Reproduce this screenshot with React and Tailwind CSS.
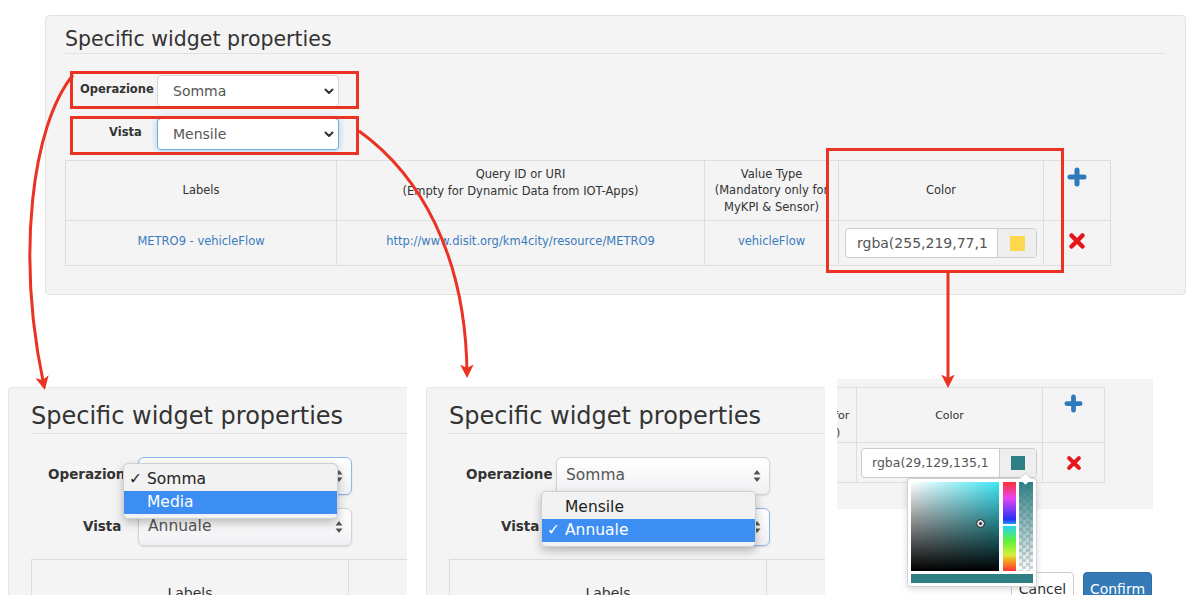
import React from 'react';

const FONT = "font-['DejaVu_Sans',sans-serif]";
const RED = '#ea3323';

// small glyph drawings
function Chevron() {
  return (
    <svg width="10" height="7" viewBox="0 0 10 7" className="shrink-0">
      <path d="M1.5 1.5 L5 5 L8.5 1.5" fill="none" stroke="#333" strokeWidth="2" strokeLinecap="round" strokeLinejoin="round" />
    </svg>
  );
}

function UpDown() {
  return (
    <svg width="8" height="14" viewBox="0 0 8 14" className="shrink-0">
      <path d="M4 1 L7.5 5.5 H0.5 Z" fill="#555" />
      <path d="M4 13 L7.5 8.5 H0.5 Z" fill="#555" />
    </svg>
  );
}

function PlusIcon({ size = 20 }) {
  return (
    <svg width={size} height={size} viewBox="0 0 20 20">
      <path d="M10 3 V17 M3 10 H17" stroke="#2f79bd" strokeWidth="5" strokeLinecap="round" />
    </svg>
  );
}

function RemoveIcon({ size = 18 }) {
  return (
    <svg width={size} height={size} viewBox="0 0 18 18">
      <path d="M3.5 3.5 L14.5 14.5 M14.5 3.5 L3.5 14.5" stroke="#e8141b" strokeWidth="4.5" strokeLinecap="round" />
    </svg>
  );
}

function TopSelect({ value, focused }) {
  return (
    <div className={`flex h-[32px] w-[182px] items-center justify-between rounded-[4px] border bg-white pl-[15px] pr-[4px] text-[14px] text-[#555] ${focused ? 'border-[#66afe9] shadow-[0_0_6px_rgba(102,175,233,0.6)]' : 'border-[#d6d6d6]'}`}>
      <span>{value}</span>
      <Chevron />
    </div>
  );
}

function MacSelect({ value, focused }) {
  return (
    <div className={`flex h-[38px] w-[214px] items-center justify-between rounded-[6px] border bg-[linear-gradient(to_bottom,#ffffff,#f1f1f4)] pl-[9px] pr-[8px] text-[15.5px] text-[#555] shadow-[0_1px_2px_rgba(0,0,0,0.12)] ${focused ? 'border-[#8db7ee]' : 'border-[#d4d4d8]'}`}>
      <span>{value}</span>
      <UpDown />
    </div>
  );
}

function MacMenu({ items, selected, highlight, className }) {
  return (
    <div className={`absolute w-[215px] rounded-[5px] border border-[#d0d0d0] bg-[#f2f2f2] py-[4px] shadow-[0_4px_10px_rgba(0,0,0,0.25)] ${className}`}>
      {items.map((it) => (
        <div key={it} className={`flex h-[23px] items-center text-[15.5px] ${it === highlight ? 'bg-[#3d8ef2] text-white' : 'text-[#222]'}`}>
          <span className="w-[23px] pl-[5px]">{it === selected ? '✓' : ''}</span>
          <span>{it}</span>
        </div>
      ))}
    </div>
  );
}

function MiniPanel({ opValue, vistaValue, opFocused, vistaFocused, menu, className }) {
  return (
    <div className={`relative h-[208px] w-[399px] shrink-0 overflow-hidden ${className}`}>
      <div className="h-full w-[430px] rounded-tl-[4px] border-l border-t border-[#e6e6e6] bg-[#f4f4f4] pl-[22px] pt-[13px]">
        <h2 className="border-b border-[#e0e0e0] pb-[2px] text-[24px] leading-[30px] text-[#333]">Specific widget properties</h2>
        <div className="mt-[23px] flex">
          <div className="w-[107px] pl-[17px] pt-[9px] text-[13.5px] font-bold leading-[17px] text-[#333]">Operazione</div>
          <MacSelect value={opValue} focused={opFocused} />
        </div>
        <div className="mt-[13px] flex">
          <div className="w-[107px] pl-[52px] pt-[10px] text-[13.5px] font-bold leading-[17px] text-[#333]">Vista</div>
          <MacSelect value={vistaValue} focused={vistaFocused} />
        </div>
        <div className="mt-[13px] flex h-[80px] border-l border-t border-[#dcdcdc]">
          <div className="w-[317px] shrink-0 border-r border-[#dcdcdc] pt-[24px] text-center text-[14px] leading-[18px] text-[#333]">Labels</div>
        </div>
      </div>
      {menu}
    </div>
  );
}

function Picker() {
  return (
    <div className="absolute left-[70px] top-[99px] h-[109px] w-[130px] rounded-[3px] border border-[#cfd3dc] bg-white p-[3px] shadow-[0_2px_6px_rgba(0,0,0,0.15)]">
      <div className="absolute right-[6px] top-[-5px] h-[9px] w-[9px] rotate-45 border-l border-t border-[#cfd3dc] bg-white" />
      <div className="flex">
        <div className="relative h-[89px] w-[88px] bg-[linear-gradient(to_top,#000,transparent),linear-gradient(to_right,#fff,#3fe6f5)]">
          <div className="absolute left-[66px] top-[38px] h-[7px] w-[7px] rounded-full border-2 border-[#ddd] bg-[#333] outline outline-1 outline-[#333]" />
        </div>
        <div className="relative ml-[4px] h-[89px] w-[13px] bg-[linear-gradient(to_bottom,#f33,#e845f0_18%,#2232f5_42%,#27d7f0_50%,#5ef03a_66%,#d7f03a_82%,#f5a623_88%,#f33)]">
          <div className="absolute left-0 top-[42px] h-[2px] w-full bg-white" />
        </div>
        <div className="ml-[3px] h-[89px] w-[14px] bg-[linear-gradient(to_bottom,#2e7f84,rgba(46,127,132,0)),repeating-conic-gradient(#d4d4d4_0_25%,#ffffff_0_50%)] bg-[length:100%_100%,7px_7px]" />
      </div>
      <div className="mt-[3px] h-[9px] w-[122px] bg-[#2e7f84]" />
    </div>
  );
}

export default function App() {
  const td = 'border border-[#dedede]';
  return (
    <div className={`relative h-[595px] w-[1200px] overflow-hidden bg-white ${FONT}`}>
      {/* main screenshot */}
      <div className="pl-[45px] pt-[15px]">
        <div className="h-[280px] w-[1141px] rounded-[4px] border border-[#e3e3e3] bg-[#f4f4f4] px-[19px] pt-[9px]">
          <h2 className="border-b border-[#e2e2e2] text-[20.5px] leading-[28px] text-[#333]">Specific widget properties</h2>
          <div className="mt-[21px] flex">
            <div className="w-[92px] pl-[15px] pt-[7px] text-[11.5px] font-bold leading-[14px] text-[#333]">Operazione</div>
            <TopSelect value="Somma" />
          </div>
          <div className="mt-[11px] flex">
            <div className="w-[92px] pl-[44px] pt-[7px] text-[11.5px] font-bold leading-[14px] text-[#333]">Vista</div>
            <TopSelect value="Mensile" focused />
          </div>
          <table className="mt-[10px] w-[1045px] table-fixed border-collapse text-center text-[11.5px] leading-[16.5px] text-[#333]">
            <colgroup>
              <col className="w-[271px]" />
              <col className="w-[368px]" />
              <col className="w-[134px]" />
              <col className="w-[205px]" />
              <col className="w-[67px]" />
            </colgroup>
            <tbody>
              <tr className="h-[60px]">
                <td className={td}>Labels</td>
                <td className={`${td} pt-[5px] align-top`}>Query ID or URI<br />(Empty for Dynamic Data from IOT-Apps)</td>
                <td className={td}>Value Type<br />(Mandatory only for<br />MyKPI &amp; Sensor)</td>
                <td className={td}>Color</td>
                <td className={`${td} pt-[6px] align-top`}>
                  <div className="flex justify-center"><PlusIcon size={20} /></div>
                </td>
              </tr>
              <tr className="h-[45px] text-[#3a7bbd]">
                <td className={`${td} pb-[4px]`}>METRO9 - vehicleFlow</td>
                <td className={`${td} pb-[4px]`}>http://www.disit.org/km4city/resource/METRO9</td>
                <td className={`${td} pb-[4px]`}>vehicleFlow</td>
                <td className={`${td} pl-[6px]`}>
                  <div className="flex h-[30px] w-[192px] overflow-hidden rounded-[4px] border border-[#ccc] bg-white">
                    <div className="flex flex-1 items-center pl-[11px] text-left text-[14px] text-[#555]">rgba(255,219,77,1</div>
                    <div className="flex w-[39px] items-center justify-center border-l border-[#ccc] bg-[#eee]">
                      <div className="h-[15px] w-[15px] bg-[#ffd94d]" />
                    </div>
                  </div>
                </td>
                <td className={`${td} pb-[4px]`}>
                  <div className="flex justify-center"><RemoveIcon size={18} /></div>
                </td>
              </tr>
            </tbody>
          </table>
        </div>
      </div>

      {/* zoomed details */}
      <div className="mt-[84px] flex items-start pl-[8px]">
        <MiniPanel
          className="mt-[8px]"
          opValue="Somma"
          vistaValue="Annuale"
          opFocused
          menu={<MacMenu items={['Somma', 'Media']} selected="Somma" highlight="Media" className="left-[115px] top-[76px]" />}
        />
        <MiniPanel
          className="ml-[19px] mt-[8px]"
          opValue="Somma"
          vistaValue="Annuale"
          vistaFocused
          menu={<MacMenu items={['Mensile', 'Annuale']} selected="Annuale" highlight="Annuale" className="left-[115px] top-[104px]" />}
        />
        <div className="relative ml-[12px] h-[216px] w-[316px] shrink-0 overflow-hidden bg-white">
          <div className="h-[130px] bg-[#f4f4f4] pt-[8px]">
            <table className="ml-[-104px] table-fixed border-collapse text-center text-[11px] leading-[17px] text-[#333]">
              <colgroup>
                <col className="w-[123px]" />
                <col className="w-[186px]" />
                <col className="w-[62px]" />
              </colgroup>
              <tbody>
                <tr className="h-[55px]">
                  <td className={td}>Value Type<br />(Mandatory only for<br />MyKPI &amp; Sensor)</td>
                  <td className={td}>Color</td>
                  <td className={`${td} pt-[6px] align-top`}>
                    <div className="flex justify-center"><PlusIcon size={19} /></div>
                  </td>
                </tr>
                <tr className="h-[40px]">
                  <td className={td} />
                  <td className={`${td} pl-[4px]`}>
                    <div className="flex h-[30px] w-[176px] overflow-hidden rounded-[4px] border border-[#ccc] bg-white">
                      <div className="flex flex-1 items-center pl-[10px] text-left text-[12.5px] text-[#555]">rgba(29,129,135,1</div>
                      <div className="flex w-[37px] items-center justify-center border-l border-[#ccc] bg-[#eee]">
                        <div className="h-[14px] w-[14px] bg-[#2e7f84]" />
                      </div>
                    </div>
                  </td>
                  <td className={td}>
                    <div className="flex justify-center"><RemoveIcon size={16} /></div>
                  </td>
                </tr>
              </tbody>
            </table>
          </div>
          <div className="mt-[63px] flex justify-end gap-[9px] pr-[1px]">
            <div className="flex h-[34px] w-[63px] items-center justify-center rounded-[4px] border border-[#ccc] bg-white text-[14px] text-[#333]">Cancel</div>
            <div className="flex h-[34px] w-[69px] items-center justify-center rounded-[4px] border border-[#2e6da4] bg-[#337ab7] text-[14px] text-white">Confirm</div>
          </div>
          <Picker />
        </div>
      </div>

      {/* red annotations */}
      <svg className="pointer-events-none absolute left-0 top-0" width="1200" height="595" viewBox="0 0 1200 595">
        <defs>
          <marker id="ah" viewBox="0 0 10 10" refX="7" refY="5" markerWidth="4.5" markerHeight="4.5" orient="auto" markerUnits="strokeWidth">
            <path d="M0 0 L10 5 L0 10 L2.5 5 Z" fill={RED} />
          </marker>
        </defs>
        <rect x="71.5" y="72.5" width="286" height="35" fill="none" stroke={RED} strokeWidth="3" />
        <rect x="71.5" y="117.5" width="286" height="36" fill="none" stroke={RED} strokeWidth="3" />
        <rect x="827.5" y="149.5" width="235" height="122" fill="none" stroke={RED} strokeWidth="3" />
        <path d="M948 273 L948 384" fill="none" stroke={RED} strokeWidth="3" markerEnd="url(#ah)" />
        <path d="M73 75 C 32 125, 16 255, 44 386" fill="none" stroke={RED} strokeWidth="3" markerEnd="url(#ah)" />
        <path d="M359 131 C 420 175, 466 255, 467 374" fill="none" stroke={RED} strokeWidth="3" markerEnd="url(#ah)" />
      </svg>
    </div>
  );
}
